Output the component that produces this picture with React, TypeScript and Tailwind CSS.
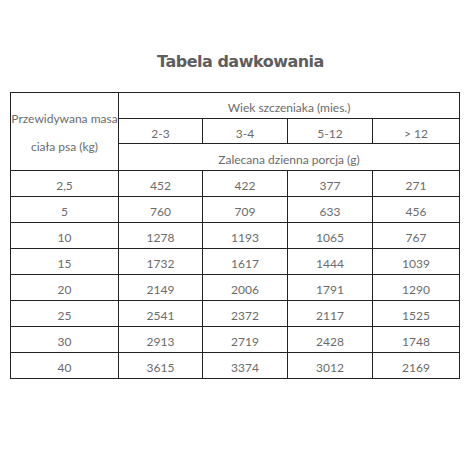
const rows = [
  ["2,5", "452", "422", "377", "271"],
  ["5", "760", "709", "633", "456"],
  ["10", "1278", "1193", "1065", "767"],
  ["15", "1732", "1617", "1444", "1039"],
  ["20", "2149", "2006", "1791", "1290"],
  ["25", "2541", "2372", "2117", "1525"],
  ["30", "2913", "2719", "2428", "1748"],
  ["40", "3615", "3374", "3012", "2169"],
];

const cell = "border-[1.5px] border-[#222] text-center align-bottom";

export default function App() {
  return (
    <div className="h-[470px] w-[470px] bg-white font-['Lato',sans-serif] text-[12px] text-[#6b6b6b]">
      <h1 className="pl-[11px] pt-[51px] text-center font-['DejaVu_Sans',sans-serif] text-[16px] font-bold leading-[22px] tracking-[-0.5px] text-[#5e5e5e]">
        Tabela dawkowania
      </h1>
      <table className="ml-[10px] mt-[19px] w-[449px] table-fixed border-collapse">
        <colgroup>
          <col className="w-[108px]" />
          <col className="w-[84px]" />
          <col className="w-[85px]" />
          <col className="w-[85px]" />
          <col className="w-[87px]" />
        </colgroup>
        <thead>
          <tr className="h-[26px]">
            <th rowSpan={3} className={`${cell} !align-middle whitespace-nowrap p-0 font-normal leading-[28px]`}>
              <div className="pt-[2px]">Przewidywana masa</div>
              <div>ciała psa (kg)</div>
            </th>
            <th colSpan={4} className={`${cell} pb-[1px] font-normal`}>
              Wiek szczeniaka (mies.)
            </th>
          </tr>
          <tr className="h-[25px]">
            <th className={`${cell} font-normal`}>2-3</th>
            <th className={`${cell} font-normal`}>3-4</th>
            <th className={`${cell} font-normal`}>5-12</th>
            <th className={`${cell} font-normal`}>&gt; 12</th>
          </tr>
          <tr className="h-[27px]">
            <th colSpan={4} className={`${cell} pb-[1px] font-normal`}>
              Zalecana dzienna porcja (g)
            </th>
          </tr>
        </thead>
        <tbody>
          {rows.map((r) => (
            <tr key={r[0]} className="h-[26px]">
              {r.map((v, i) => (
                <td key={i} className={`${cell} pb-[1px]`}>
                  {v}
                </td>
              ))}
            </tr>
          ))}
        </tbody>
      </table>
    </div>
  );
}
